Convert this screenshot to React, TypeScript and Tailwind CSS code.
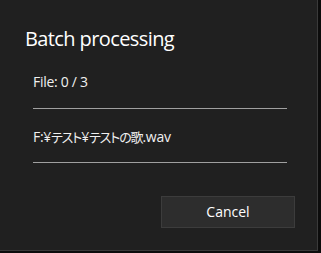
import React from 'react';

const App: React.FC = () => {
  const jp = "text-[13px] tracking-[-1.1px]";
  return (
    <div className="w-[321px] h-[253px] bg-[#0c0c0c] overflow-hidden">
      <div
        className="w-[318px] h-[251px] bg-[#202020] border-r border-b border-[#3a3a3a] text-white flex flex-col"
        style={{ fontFamily: '"Open Sans", "Noto Sans CJK JP", sans-serif' }}
      >
        {/* Title */}
        <h1 className="mt-[25px] ml-[25px] text-[20px] leading-[28px] font-normal tracking-[-0.6px] text-[#ffffff]">
          Batch processing
        </h1>

        {/* Progress */}
        <div className="ml-[33px] w-[254px] flex flex-col">
          <div className="mt-[19px] text-[14px] leading-[20px] tracking-[-0.3px] text-[#f0f0f0]">File: 0 / 3</div>
          <div className="mt-[16px] h-px bg-[#a0a0a0]"></div>
          <div className="mt-[18px] h-[20px] text-[14px] leading-[20px] tracking-[-0.3px] text-[#f0f0f0] [font-feature-settings:'palt']">
            F:¥<span className={jp}>テスト</span>¥<span className={jp}>テストの歌</span>.wav
          </div>
          <div className="mt-[15px] h-px bg-[#a0a0a0]"></div>
        </div>

        {/* Actions */}
        <div className="mt-[33px] flex justify-end pr-[22px]">
          <button className="w-[134px] h-[32px] bg-[#2d2d2d] border border-[#3c3c3c] text-[14px] text-[#ffffff] leading-[20px]">
            Cancel
          </button>
        </div>
      </div>
    </div>
  );
};

export default App;
